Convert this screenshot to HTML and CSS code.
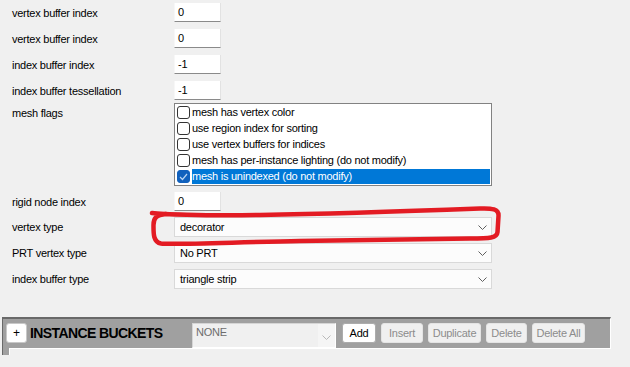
FILE: index.html
```html
<!DOCTYPE html>
<html lang="en">

<head>
    <meta charset="UTF-8">
    <meta name="viewport" content="width=device-width, initial-scale=1.0">
    <link rel="stylesheet" href="styles.css">
</head>

<body>

    <div class="form">
        <div class="row">
            <div class="label">vertex buffer index</div>
            <div class="field">0</div>
        </div>
        <div class="row">
            <div class="label">vertex buffer index</div>
            <div class="field">0</div>
        </div>
        <div class="row">
            <div class="label">index buffer index</div>
            <div class="field">-1</div>
        </div>
        <div class="row">
            <div class="label">index buffer tessellation</div>
            <div class="field">-1</div>
        </div>
        <div class="row row-flags">
            <div class="label">mesh flags</div>
            <div class="listbox">
                <div class="item"><span class="box"></span><span class="text">mesh has vertex color</span></div>
                <div class="item"><span class="box"></span><span class="text">use region index for sorting</span></div>
                <div class="item"><span class="box"></span><span class="text">use vertex buffers for indices</span></div>
                <div class="item"><span class="box"></span><span class="text">mesh has per-instance lighting (do not modify)</span></div>
                <div class="item selected">
                    <span class="box checked">
                        <svg width="11" height="11" viewBox="0 0 11 11"><polyline points="2,6 4.5,8.5 9,3" fill="none" stroke="#b9d4f2" stroke-width="1.2"/></svg>
                    </span>
                    <span class="text">mesh is unindexed (do not modify)</span>
                </div>
            </div>
        </div>
        <div class="row row-rigid">
            <div class="label">rigid node index</div>
            <div class="field">0</div>
        </div>
        <div class="row row-select">
            <div class="label">vertex type</div>
            <div class="combo">
                <span>decorator</span>
                <svg class="chev" width="9" height="5" viewBox="0 0 9 5"><polyline points="0.5,0.5 4.5,4.5 8.5,0.5" fill="none" stroke="#606060"/></svg>
            </div>
        </div>
        <div class="row row-select">
            <div class="label">PRT vertex type</div>
            <div class="combo">
                <span>No PRT</span>
                <svg class="chev" width="9" height="5" viewBox="0 0 9 5"><polyline points="0.5,0.5 4.5,4.5 8.5,0.5" fill="none" stroke="#606060"/></svg>
            </div>
        </div>
        <div class="row row-select">
            <div class="label">index buffer type</div>
            <div class="combo">
                <span>triangle strip</span>
                <svg class="chev" width="9" height="5" viewBox="0 0 9 5"><polyline points="0.5,0.5 4.5,4.5 8.5,0.5" fill="none" stroke="#606060"/></svg>
            </div>
        </div>
    </div>

    <div class="buckets">
        <div class="bucket-bar">
            <div class="toggle">+</div>
            <div class="bucket-title">INSTANCE BUCKETS</div>
            <div class="combo-off">
                <span>NONE</span>
                <span class="combo-off-btn">
                    <svg width="9" height="5" viewBox="0 0 9 5"><polyline points="0.5,0.5 4.5,4.5 8.5,0.5" fill="none" stroke="#b8b8b8"/></svg>
                </span>
            </div>
            <div class="btn btn-add">Add</div>
            <div class="btn off w42">Insert</div>
            <div class="btn off w53">Duplicate</div>
            <div class="btn off w41">Delete</div>
            <div class="btn off w53">Delete All</div>
        </div>
        <div class="bucket-stub"></div>
    </div>

    <!-- red marker drawn over the screenshot -->
    <svg class="marker" width="630" height="367" viewBox="0 0 630 367">
        <path d="M152 213 C160 214, 200 216, 260 215 S440 210, 480 208.5 C492 208, 499 209, 498.5 216 L497.5 232 C497 238, 490 238.5, 470 238.5 L300 241 C240 242, 172 245, 161 243.5 C153 242, 153.5 233, 153.5 225 C153.5 218, 156 215, 166 214"
            fill="none" stroke="#e31b23" stroke-width="4.5" stroke-linecap="round" stroke-linejoin="round"/>
    </svg>

</body>

</html>
```

FILE: styles.css
```css
body {
    margin: 0;
    background: #f0f0f0;
    font-family: 'Liberation Sans', Arial, sans-serif;
    font-size: 11px;
    letter-spacing: -0.25px;
    color: #000;
    position: relative;
    height: 367px;
    overflow: hidden;
}

.form {
    display: flex;
    flex-direction: column;
    padding: 3px 0 0 12px;
}

.row {
    display: flex;
    align-items: center;
    margin-bottom: 7px;
}

.label {
    width: 162px;
    flex: 0 0 auto;
    white-space: nowrap;
}

.field {
    box-sizing: border-box;
    width: 47px;
    height: 19px;
    line-height: 18px;
    padding-left: 3px;
    background: #fff;
    border-left: 1px solid #f7f7f7;
    border-right: 1px solid #e2e2e2;
    border-bottom: 1px solid #8a8a8a;
}

.row:nth-child(4) {
    margin-bottom: 3px;
}

.row-flags {
    align-items: flex-start;
    margin-bottom: 6px;
}

.row-flags .label {
    padding-top: 4px;
}

.listbox {
    box-sizing: border-box;
    width: 318px;
    height: 83px;
    background: #fff;
    border: 1px solid #828282;
    padding-right: 1px;
}

.item {
    display: flex;
    align-items: center;
    height: 16px;
}

.box {
    box-sizing: border-box;
    width: 13px;
    height: 13px;
    margin: 0 2px 0 2px;
    border: 1px solid #333;
    border-radius: 3px;
    background: #fff;
    display: flex;
    align-items: center;
    justify-content: center;
}

.box.checked {
    background: #1161bd;
    border-color: #1161bd;
}

.text {
    flex: 1;
    height: 16px;
    line-height: 16px;
    white-space: nowrap;
}

.selected .text {
    background: #0078d7;
    color: #fff;
    height: 15px;
    line-height: 15px;
}

.row-rigid {
    margin-bottom: 6px;
}

.row-select {
    margin-bottom: 6px;
}

.combo {
    box-sizing: border-box;
    width: 318px;
    height: 20px;
    padding: 0 4px 0 5px;
    display: flex;
    align-items: center;
    justify-content: space-between;
    background: #fcfcfc;
    border: 1px solid #d9d9d9;
}

/* instance buckets header */
.buckets {
    margin-top: 22px;
    padding-left: 2px;
}

.bucket-bar {
    box-sizing: border-box;
    width: 609px;
    height: 32px;
    display: flex;
    align-items: flex-start;
    padding: 4px 0 0 3px;
    background: #a0a0a0;
    border-top: 2px solid #696969;
    border-left: 1px solid #696969;
    border-bottom: 1px solid #fff;
    border-right: 1px solid #fff;
}

.toggle {
    box-sizing: border-box;
    width: 21px;
    height: 20px;
    line-height: 18px;
    text-align: center;
    background: #fff;
    border: 1px solid #c8c8c8;
    border-radius: 3px;
    font-size: 12px;
}

.bucket-title {
    width: 165px;
    padding-left: 3px;
    box-sizing: border-box;
    line-height: 20px;
    font-size: 14px;
    font-weight: bold;
    letter-spacing: -0.6px;
    white-space: nowrap;
}

.combo-off {
    box-sizing: border-box;
    width: 144px;
    height: 25px;
    display: flex;
    background: #f0f0f0;
    border: 1px solid #d5d5d5;
    border-right-color: #fff;
    border-bottom-color: #fff;
    color: #6d6d6d;
}

.combo-off span:first-child {
    flex: 1;
    padding: 2px 0 0 3px;
}

.combo-off-btn {
    width: 17px;
    background: #f5f5f5;
    display: flex;
    align-items: center;
    justify-content: center;
    padding-top: 3px;
}

.btn {
    box-sizing: border-box;
    height: 20px;
    line-height: 18px;
    text-align: center;
    margin-left: 5px;
    border-radius: 3px;
}

.btn-add {
    width: 34px;
    margin-left: 6px;
    background: #fff;
    border: 1px solid #acacac;
}

.off {
    background: #f0f0f0;
    border: 1px solid #e4e4e4;
    color: #8c8c8c;
}

.w41 {
    width: 41px;
}

.w42 {
    width: 42px;
}

.w53 {
    width: 53px;
}

.bucket-stub {
    box-sizing: border-box;
    width: 8px;
    height: 7px;
    margin-top: -1px;
    background: #a0a0a0;
    border-left: 1px solid #696969;
    border-right: 1px solid #fff;
}

.marker {
    position: absolute;
    left: 0;
    top: 0;
    pointer-events: none;
}
```
